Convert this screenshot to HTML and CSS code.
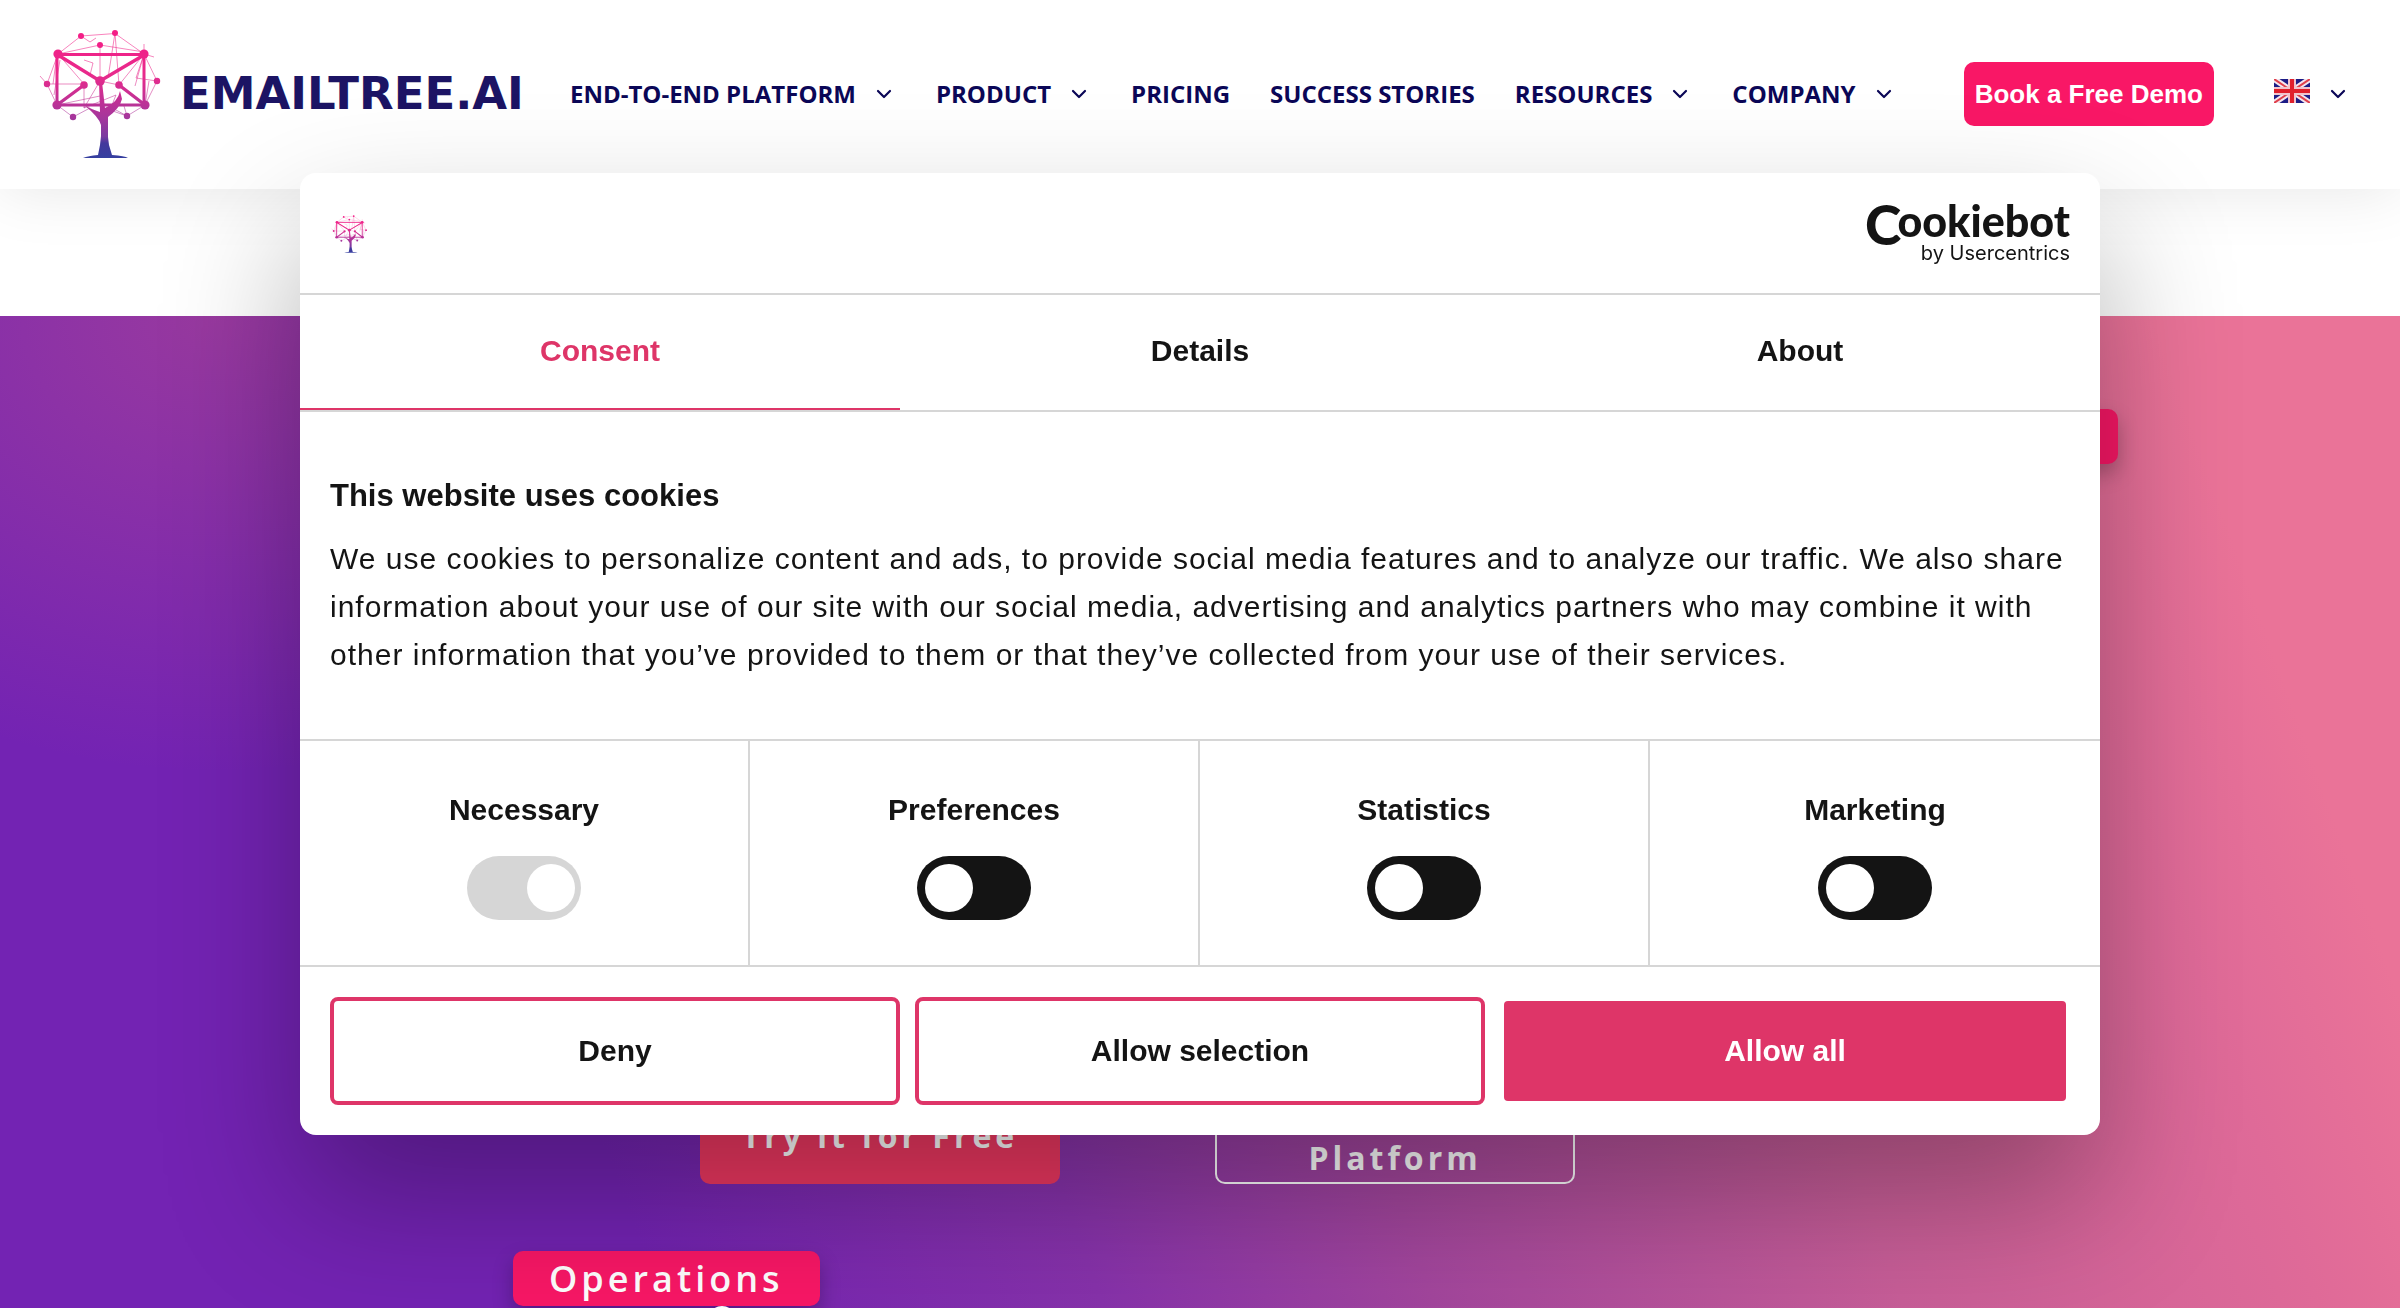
FILE: index.html
```html
<!DOCTYPE html>
<html lang="en">
<head>
<meta charset="utf-8">
<meta name="viewport" content="width=device-width, initial-scale=1">
<title>EmailTree.AI</title>
<link rel="stylesheet" href="styles.css">
</head>
<body>
<svg class="defs" aria-hidden="true">
  <defs>
    <linearGradient id="tree-ink" gradientUnits="userSpaceOnUse" x1="0" y1="30" x2="0" y2="160">
      <stop offset="0" stop-color="#f51c86"/>
      <stop offset=".35" stop-color="#e82a8c"/>
      <stop offset=".68" stop-color="#a4369c"/>
      <stop offset=".82" stop-color="#7a3aa0"/>
      <stop offset=".87" stop-color="#43389c"/>
      <stop offset="1" stop-color="#3340a0"/>
    </linearGradient>
    <symbol id="tree" viewBox="36 26 126 136">
      <g fill="none" stroke="url(#tree-ink)">
        <path stroke-width="1" opacity=".55" d="M58 54 81 36 115 33.500 144 54 157 81 145 105 127 116 105 104M58 54 100 45 144 52M58 54 47 84 57 105 73 117 90 108M47 84 40 76M47 84H84L58 54M84 85V108L100 81 119 85 144 54M100 45V81M115 33 108 78M115 33 119 85 145 105M144 54 135 86M144 54V44M144 54 154 57M57 54 53 84M149 81 145 105M81 36 90 42 96 38M84 60 93 63 90 75M84 108 116 95 110 110 127 116 124 106M144 54 136 78 157 81M57 105 100 96M60 60 54 95"/>
        <path stroke-width="3" d="M58 54.500H144V105H57V54.500"/>
        <path stroke-width="3.400" d="M58 55 100 81 144 55M84 85 57 105M119 85 145 105"/>
      </g>
      <g fill="url(#tree-ink)">
        <circle cx="81" cy="36" r="3"/><circle cx="115" cy="33" r="3"/><circle cx="100" cy="45" r="3"/>
        <circle cx="58" cy="54" r="4.600"/><circle cx="144" cy="54" r="4.600"/>
        <circle cx="47" cy="84" r="3.200"/><circle cx="157" cy="81" r="3.200"/>
        <circle cx="84" cy="85" r="3.800"/><circle cx="100" cy="81" r="4.800"/><circle cx="119" cy="85" r="3.800"/>
        <circle cx="57" cy="105" r="4.600"/><circle cx="145" cy="105" r="4.600"/>
        <circle cx="73" cy="117" r="3.200"/><circle cx="127" cy="116" r="3.200"/>
        <path d="M99 82h3l3 26q13-6 15-17l2 8q-2 9-14 18v20l1 8 3 10q13 1 16 3H83q5-2 15-3l2-10 1-9v-11q-2-8-17-20 9 5 16 7z"/>
      </g>
    </symbol>
    <symbol id="chevron" viewBox="0 0 16 10">
      <path d="M2 2 8 8l6-6" fill="none" stroke="currentColor" stroke-width="2.200" stroke-linecap="round" stroke-linejoin="round"/>
    </symbol>
  </defs>
</svg>

<header class="site-header">
  <a class="brand" href="#" aria-label="EmailTree.AI home">
    <svg class="brand-mark" aria-hidden="true"><use href="#tree"/></svg>
    <span class="brand-name">EMAILTREE.AI</span>
  </a>
  <nav class="nav" aria-label="Main">
    <a href="#">END-TO-END PLATFORM <svg class="chevron" aria-hidden="true"><use href="#chevron"/></svg></a>
    <a href="#">PRODUCT <svg class="chevron" aria-hidden="true"><use href="#chevron"/></svg></a>
    <a href="#">PRICING</a>
    <a href="#">SUCCESS STORIES</a>
    <a href="#">RESOURCES <svg class="chevron" aria-hidden="true"><use href="#chevron"/></svg></a>
    <a href="#">COMPANY <svg class="chevron" aria-hidden="true"><use href="#chevron"/></svg></a>
  </nav>
  <div class="header-actions">
    <a class="demo" href="#">Book a Free Demo</a>
    <button class="language" type="button" aria-label="English">
      <svg class="flag" viewBox="0 0 36 24" aria-hidden="true">
        <path fill="#1c1c86" d="M0 0h36v24H0z"/>
        <path stroke="#f4e6ee" stroke-width="6" d="m0 0 36 24M36 0 0 24"/>
        <path stroke="#e0404c" stroke-width="2" d="m0 0 36 24M36 0 0 24"/>
        <path stroke="#f0c4cc" stroke-width="8" d="M18 0v24M0 12h36"/>
        <path stroke="#e0202c" stroke-width="4" d="M18 0v24M0 12h36"/>
      </svg>
      <svg class="chevron" aria-hidden="true"><use href="#chevron"/></svg>
    </button>
  </div>
</header>

<main class="hero">
  <span class="badge badge-empty"></span>
  <div class="hero-actions">
    <a class="cta cta-solid" href="#">Try it for Free</a>
    <a class="cta cta-outline" href="#">Platform</a>
  </div>
  <div class="hero-team">
    <span class="badge">Operations</span>
    <span class="dot"></span>
  </div>
</main>

<div class="dialog" role="dialog" aria-labelledby="cookie-title">
  <div class="dialog-head">
    <svg class="dialog-mark" aria-hidden="true"><use href="#tree"/></svg>
    <svg class="cookiebot" viewBox="0 0 206 64" role="img" aria-label="Cookiebot by Usercentrics">
      <text class="cb-cap" x="1" y="43">C</text>
      <text class="cb-word" x="206" y="35" text-anchor="end">ookiebot</text>
      <text class="cb-by" x="206" y="58" text-anchor="end">by Usercentrics</text>
    </svg>
  </div>
  <div class="tabs" role="tablist">
    <button class="tab tab-active" type="button" role="tab" aria-selected="true">Consent</button>
    <button class="tab" type="button" role="tab" aria-selected="false">Details</button>
    <button class="tab" type="button" role="tab" aria-selected="false">About</button>
  </div>
  <div class="dialog-body">
    <h2 id="cookie-title">This website uses cookies</h2>
    <p>We use cookies to personalize content and ads, to provide social media features and to analyze our traffic. We also share information about your use of our site with our social media, advertising and analytics partners who may combine it with other information that you’ve provided to them or that they’ve collected from your use of their services.</p>
  </div>
  <div class="choices">
    <label class="choice">Necessary <input class="switch" type="checkbox" checked disabled></label>
    <label class="choice">Preferences <input class="switch" type="checkbox"></label>
    <label class="choice">Statistics <input class="switch" type="checkbox"></label>
    <label class="choice">Marketing <input class="switch" type="checkbox"></label>
  </div>
  <div class="dialog-foot">
    <button class="btn" type="button">Deny</button>
    <button class="btn" type="button">Allow selection</button>
    <button class="btn btn-primary" type="button">Allow all</button>
  </div>
</div>
</body>
</html>
```

FILE: styles.css
```css
* { box-sizing: border-box; }

html { height: 100%; }

body {
  margin: 0;
  height: 100%;
  overflow: hidden;
  display: flex;
  flex-direction: column;
  background: #fff;
  font-family: "Open Sans", "Noto Sans", sans-serif;
}

button { font: inherit; cursor: pointer; }
a { color: inherit; text-decoration: none; }

.defs { position: absolute; width: 0; height: 0; }

/* Header */
.site-header {
  display: flex;
  align-items: center;
  padding: 26px 54px 27px 36px;
  background: #fff;
  box-shadow: 0 0 60px rgba(0, 0, 0, .1);
  color: #0b0757;
}

.brand { display: flex; align-items: center; gap: 18px; width: 534px; }
.brand-mark { width: 126px; height: 136px; }
.brand-name {
  color: #1c1464;
  font: 700 45px/52px "DejaVu Sans", sans-serif;
}

.nav { display: flex; gap: 40px; font-size: 24px; font-weight: 700; line-height: 32px; white-space: nowrap; }
.nav a { display: flex; align-items: center; }
.chevron { width: 16px; height: 10px; }
.nav .chevron { margin: 0 4px 0 20px; }

.header-actions { display: flex; align-items: center; gap: 60px; margin-left: auto; }
.demo {
  padding: 16px 11px;
  border-radius: 10px;
  background: #f91766;
  color: #fff;
  font: 700 26px/32px "Liberation Sans", Arial, sans-serif;
  white-space: nowrap;
}
.language {
  display: flex;
  align-items: center;
  gap: 20px;
  padding: 0;
  border: 0;
  background: none;
  color: #0b0757;
}
.flag { width: 36px; height: 24px; margin-bottom: 6px; }

/* Hero */
.hero {
  flex: 1 0 auto;
  margin-top: 127px;
  padding-top: 93px;
  display: flex;
  flex-direction: column;
  background:
    radial-gradient(ellipse 24% 46% at 9% 0, rgba(190, 80, 140, .5), rgba(190, 80, 140, 0)),
    linear-gradient(70deg, #7323b3 0%, #7323b3 24%, #8732ab 40%, #a3469d 52%, #c85e98 69%, #df6a98 84%, #ea7398 91%);
}
.badge {
  padding: 4px 36px 3px;
  border-radius: 10px;
  background: #f91766;
  box-shadow: 0 10px 20px rgba(0, 0, 0, .25);
  color: #fff;
  font-size: 36px;
  font-weight: 600;
  line-height: 48px;
  letter-spacing: 4px;
}
.badge-empty { align-self: flex-end; width: 12%; height: 55px; margin-right: 282px; }

.hero-actions {
  display: grid;
  grid-template-columns: 360px 360px;
  gap: 155px;
  margin: 624px 0 67px 700px;
}
.cta {
  display: flex;
  align-items: center;
  justify-content: center;
  height: 96px;
  border-radius: 10px;
  color: #fff;
  font-size: 32px;
  font-weight: 700;
  line-height: 44px;
  letter-spacing: 4px;
}
.cta-solid { background: #f03862; }
.cta-outline { align-items: flex-end; padding-bottom: 2px; border: 2px solid #fff; }

.hero-team {
  display: flex;
  flex-direction: column;
  align-items: flex-start;
  width: max-content;
  height: 57px;
  margin-left: 513px;
}
.dot { align-self: center; flex: none; width: 28px; height: 28px; margin-left: 112px; border-radius: 50%; background: #fff; }

/* Cookie dialog */
.dialog {
  position: fixed;
  top: 50%;
  left: 50%;
  width: 75%;
  transform: translate(-50%, -50%);
  border-radius: 16px;
  background: #fff;
  box-shadow: 0 64px 136px rgba(0, 0, 0, .3);
  color: #141414;
  font-family: "Liberation Sans", Arial, sans-serif;
  font-size: 30px;
  line-height: 48px;
}
.dialog-head {
  display: flex;
  align-items: center;
  justify-content: space-between;
  height: 122px;
  padding: 2px 30px 0;
  border-bottom: 2px solid #d6d6d6;
}
.dialog-mark { width: 38px; height: 40px; }
.cookiebot { width: 206px; height: 64px; overflow: visible; fill: #141414; }
.cb-cap { font: 900 55px Lato, sans-serif; }
.cb-word { font: 900 43px Lato, sans-serif; }
.cb-by { font: 400 20px Inter, sans-serif; }

.tabs {
  display: grid;
  grid-template-columns: repeat(3, 1fr);
  border-bottom: 2px solid #d6d6d6;
}
.tab {
  height: 115px;
  padding: 0 0 2px;
  border: 0;
  border-bottom: 2px solid transparent;
  background: none;
  color: #141414;
  font-weight: 700;
}
.tab-active { border-color: #de3568; color: #de3568; }

.dialog-body { padding: 60px 30px; }
.dialog-body h2 { margin: 0 0 15px; font-size: 31px; }
.dialog-body p { margin: 0; letter-spacing: 1px; }

.choices {
  display: grid;
  grid-template-columns: repeat(4, 1fr);
  border: solid #d6d6d6;
  border-width: 2px 0;
}
.choice {
  display: flex;
  flex-direction: column;
  align-items: center;
  gap: 22px;
  padding: 45px 0;
  border-right: 2px solid #d6d6d6;
  font-weight: 700;
}
.choice:last-child { border-right: 0; }
.switch {
  appearance: none;
  display: flex;
  width: 114px;
  height: 64px;
  margin: 0;
  padding: 8px;
  border-radius: 32px;
  background: #141414;
}
.switch::before { content: ""; width: 48px; height: 48px; border-radius: 50%; background: #fff; }
.switch:checked { justify-content: flex-end; padding-right: 6px; }
.switch:disabled { background: #d6d6d6; }

.dialog-foot {
  display: grid;
  grid-template-columns: repeat(3, 1fr);
  gap: 15px;
  padding: 30px;
}
.btn {
  height: 108px;
  padding: 0;
  border: 4px solid #de3568;
  border-radius: 8px;
  background: #fff;
  color: #141414;
  font-weight: 700;
}
.btn-primary { border-color: transparent; background: #de3568 padding-box; color: #fff; }
```
